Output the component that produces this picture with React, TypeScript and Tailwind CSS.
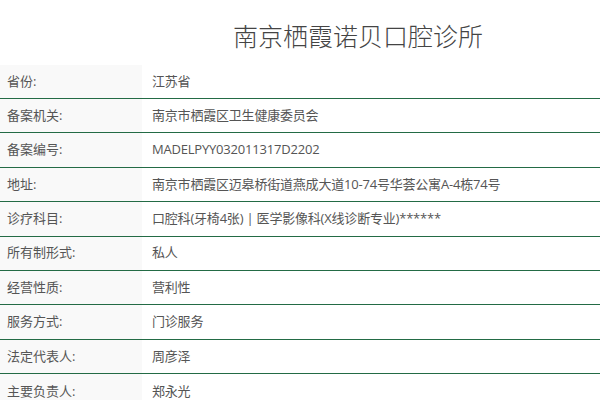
import React from "react";

const rows: [string, string][] = [
  ["省份:", "江苏省"],
  ["备案机关:", "南京市栖霞区卫生健康委员会"],
  ["备案编号:", "MADELPYY032011317D2202"],
  ["地址:", "南京市栖霞区迈皋桥街道燕成大道10-74号华荟公寓A-4栋74号"],
  ["诊疗科目:", "口腔科(牙椅4张) | 医学影像科(X线诊断专业)******"],
  ["所有制形式:", "私人"],
  ["经营性质:", "营利性"],
  ["服务方式:", "门诊服务"],
  ["法定代表人:", "周彦泽"],
  ["主要负责人:", "郑永光"],
];

export default function App() {
  return (
    <div
      className="w-[600px] h-[400px] overflow-hidden bg-white text-[#555]"
      style={{ fontFamily: '"Open Sans", "Noto Sans CJK SC", sans-serif' }}
    >
      <div className="h-[64.6px] flex items-center pl-[233px] pt-[6px]">
        <h1
          className="text-[25px] leading-none text-[#444] font-light whitespace-nowrap"
          style={{ fontFamily: '"Noto Sans CJK SC", sans-serif' }}
        >
          南京栖霞诺贝口腔诊所
        </h1>
      </div>
      <div className="flex flex-col">
        {rows.map(([k, v], i) => (
          <div
            key={i}
            className={`flex h-[34.4px] shrink-0 text-[13px] ${i < rows.length - 1 ? "border-b border-[#236b45]" : ""}`}
          >
            <div className="w-[142px] shrink-0 bg-[#f9f9f9] flex items-center pl-[7px]">{k}</div>
            <div className="flex-1 flex items-center pl-[10px] whitespace-nowrap tracking-[-0.2px]">{v}</div>
          </div>
        ))}
      </div>
    </div>
  );
}
